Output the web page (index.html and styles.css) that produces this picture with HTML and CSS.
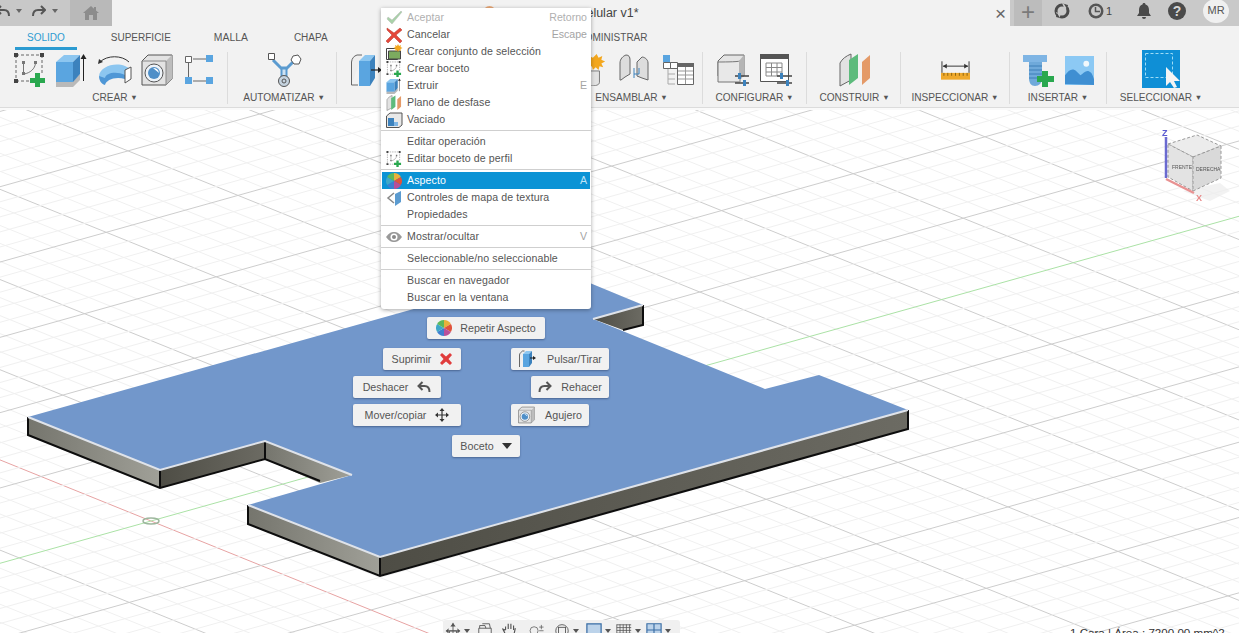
FILE: index.html
```html
<!DOCTYPE html>
<html lang="es">
<head>
<meta charset="utf-8">
<title>Fusion</title>
<link rel="stylesheet" href="styles.css">
</head>
<body>
<svg class="defs" aria-hidden="true">
  <symbol id="s-sketch" viewBox="0 0 32 34">
    <path d="M2 2H28M2 2V28M2 28H22M28 2V20" fill="none" stroke="#666" stroke-width="1" stroke-dasharray="3 2"/>
    <path d="M0 0h4v4H0zM26 0h4v4h-4zM0 26h4v4H0z" fill="#444"/>
    <path d="M8 8h3v3H8zM20 8h3v3h-3zM8 19h3v3H8z" fill="#777"/>
    <path d="M9.500 10V20M21.500 10C21 16 16 20 10 21" fill="none" stroke="#777"/>
    <path d="M21 20h5v5h5v5h-5v4h-5v-4h-5v-5h5z" fill="#2aa84f"/>
  </symbol>
  <symbol id="s-extrude" viewBox="0 0 34 34">
    <path d="M1 28h17l7-7v6l-7 7H1z" fill="#b9b9b9"/>
    <path d="M1 9h17v20H1z" fill="#5aa5e0"/>
    <path d="M1 9l8-7h16l-7 7z" fill="#8cc6f0"/>
    <path d="M18 9l7-7v19l-7 8z" fill="#3c82bd"/>
    <path d="M28.500 28V4" stroke="#222" fill="none"/>
    <path d="M28.500 1l-3 5h6z" fill="#222"/>
  </symbol>
  <symbol id="s-plane" viewBox="0 0 32 34">
    <path d="M1 10C3 6 7 3 12 1V27L1 33z" fill="#e2e2e2" stroke="#666"/>
    <path d="M10 7L19 1V25L10 32z" fill="#5dbb7c"/>
    <path d="M23 9L31 2V25L23 32z" fill="#e49a68"/>
  </symbol>
  <symbol id="s-hole" viewBox="0 0 34 34">
    <path d="M1 8L7 2H31V26L25 32H1z" fill="#e3e3e3" stroke="#555"/>
    <path d="M25 8L31 2V26L25 32z" fill="#bdbdbd"/>
    <path d="M1 8H25V32" fill="none" stroke="#888"/>
    <circle cx="13" cy="20" r="9" fill="#eef3f8" stroke="#555"/>
    <circle cx="13" cy="20" r="6" fill="#4f8fc8"/>
    <path d="M12 15a6 6 0 0 1 6 5z" fill="#fff"/>
  </symbol>
  <symbol id="s-select" viewBox="0 0 38 38">
    <path d="M0 0h38v38H0z" fill="#0f8fd6"/>
    <path d="M3.500 3.500h27v24h-27z" fill="none" stroke="#9fdcf6" stroke-dasharray="3 2"/>
    <path d="M24 17l14 14h-6l3 6-3 1-4-6-4 4z" fill="#f4f4f4"/>
  </symbol>
  <symbol id="s-palette" viewBox="0 0 16 16">
    <path d="M8 8V0a8 8 0 0 1 6.900 4z" fill="#e8b13c"/>
    <path d="M8 8l6.900-4a8 8 0 0 1 0 8z" fill="#e0533c"/>
    <path d="M8 8l6.900 4A8 8 0 0 1 8 16z" fill="#b94f9a"/>
    <path d="M8 8v8a8 8 0 0 1-6.900-4z" fill="#3f7fd0"/>
    <path d="M8 8L1.100 12a8 8 0 0 1 0-8z" fill="#3fa8c8"/>
    <path d="M8 8L1.100 4A8 8 0 0 1 8 0z" fill="#5cb85c"/>
  </symbol>
</svg>

<div class="app">
  <header class="topbar">
    <div class="quick">
      <svg class="qicon undo" viewBox="0 0 14 12"><path d="M5 1L1 5l4 4M1 5h7c3 0 5 2 5 6" fill="none" stroke="#555" stroke-width="2"/></svg>
      <i class="tri-caret"></i>
      <svg class="qicon redo" viewBox="0 0 14 12"><path d="M9 1l4 4-4 4M13 5H6c-3 0-5 2-5 6" fill="none" stroke="#555" stroke-width="2"/></svg>
      <i class="tri-caret"></i>
      <div class="home">
        <svg class="home-ic" viewBox="0 0 16 14"><path d="M8 0L0 7h2v7h4V9h4v5h4V7h2l-3-2.600V1h-2v1.700z" fill="#8c8c8c"/></svg>
      </div>
    </div>
    <div class="doctab">
      <span></span>
      <div class="doctitle">
        <span class="docdot"></span>
        <span>Soporte para celular v1*</span>
      </div>
      <span class="close">×</span>
    </div>
    <div class="topright">
      <div class="plus">+</div>
      <svg class="tri tri-sync" viewBox="0 0 16 16"><circle cx="8" cy="8" r="6" fill="none" stroke="#4a4a4a" stroke-width="3"/><path d="M8 0l6 3-3 4zM5 16L2 9l5 2z" fill="#c9c9c9"/><path d="M10 1l4 1-1 4zM6 15l-4-1 1-4z" fill="#4a4a4a"/></svg>
      <div class="jobs">
        <svg class="tri" viewBox="0 0 16 16"><circle cx="8" cy="8" r="7.500" fill="#555"/><circle cx="8" cy="8" r="5" fill="#c9c9c9"/><path d="M7.500 4v4.500H12" fill="none" stroke="#555" stroke-width="1.500"/></svg>
        <span>1</span>
      </div>
      <svg class="tri tri-bell" viewBox="0 0 14 16"><path d="M7 0c1 0 1.500.7 1.500 1.500C11 2.300 12 4.500 12 7v3l2 3H0l2-3V7c0-2.500 1-4.700 3.500-5.500C5.500.7 6 0 7 0z" fill="#4a4a4a"/><path d="M5 14h4a2 2 0 0 1-4 0z" fill="#4a4a4a"/></svg>
      <div class="help">?</div>
      <div class="avatar">MR</div>
    </div>
  </header>

  <section class="ribbon">
    <nav class="tabs">
      <span class="tab active">SOLIDO</span>
      <span class="tab">SUPERFICIE</span>
      <span class="tab tab-malla">MALLA</span>
      <span class="tab">CHAPA</span>
      <span class="tab tab-admin">ADMINISTRAR</span>
    </nav>
    <div class="groups">
      <div class="group g-create">
        <div class="tools">
          <svg class="t32"><use href="#s-sketch"/></svg>
          <svg class="t34"><use href="#s-extrude"/></svg>
          <svg class="t34" viewBox="0 0 34 34">
            <path d="M2 9C9 2 24 2 31 9" fill="none" stroke="#333"/><path d="M0 11l1-5 4 3z" fill="#333"/>
            <path d="M1 23C2 14 16 9 27 13l6 3-6 8C20 20 9 23 7 30z" fill="#8cc6f0"/>
            <path d="M1 23C1 27 3 31 7 32c1-5 10-9 20-6v-4C18 18 8 20 7 25z" fill="#4f97d6"/>
            <path d="M27 17l6-3v12l-6 4z" fill="#fff" stroke="#555"/>
          </svg>
          <svg class="t34"><use href="#s-hole"/></svg>
          <svg class="t32" viewBox="0 0 32 32">
            <path d="M9 5h13M4.500 9v14M9 27h13" stroke="#666" fill="none"/>
            <path d="M1.500 2.500h6v6h-6z" fill="#fff" stroke="#666"/>
            <path d="M22 1h7v7h-7zM1 23h7v7H1zM22 23h7v7h-7z" fill="#5aa5e0"/>
          </svg>
        </div>
        <div class="glabel">CREAR <i>▼</i></div>
      </div>
      <div class="group g-auto">
        <div class="tools">
          <svg class="t36" viewBox="0 0 36 36">
            <path d="M7 8L16 17V26M29 8L20 17V26M14 16H22" fill="none" stroke="#5b9bd0" stroke-width="3"/>
            <path d="M16 17h4v9h-4z" fill="#cfe2f2" stroke="#5b9bd0"/>
            <path d="M2.500 1.500h6v6h-6z" fill="#fff" stroke="#555"/>
            <path d="M27 4l5-1 3 4-2 5-5 0-3-4z" fill="#fff" stroke="#555"/>
            <circle cx="18" cy="29" r="5.500" fill="#c5d3df" stroke="#555"/><circle cx="18" cy="29" r="2" fill="none" stroke="#555"/>
          </svg>
        </div>
        <div class="glabel">AUTOMATIZAR <i>▼</i></div>
      </div>
      <div class="group g-mod">
        <div class="tools tools-mod">
          <svg class="t32" viewBox="0 0 32 34">
            <path d="M1.500 32V9C2 5 4 3 7 2h5" fill="#eee" stroke="#666"/><path d="M1.500 32H8" stroke="#666"/>
            <path d="M9 8h11v25H9z" fill="#5aa5e0"/><path d="M9 8l6-6h10l-5 6z" fill="#8cc6f0"/><path d="M20 8l5-6v23l-5 8z" fill="#3c82bd"/>
            <path d="M21 17h8" stroke="#222" stroke-width="1.200"/><path d="M32 17l-4-3v6z" fill="#222"/>
          </svg>
        </div>
      </div>
      <div class="group g-asm">
        <div class="tools tools-asm">
          <svg class="t30" viewBox="0 0 30 34">
            <path d="M4 18h20v12c0 3-4 4-10 4S4 33 4 30z" fill="#e2e2e2" stroke="#777"/>
            <path d="M21 0l2 4 4-2-1 4 4 2-4 2 2 4-4-1-1 4-3-3-3 3-1-4-4 1 2-4-4-2 4-2-1-4 4 2z" fill="#f3a71e"/>
          </svg>
          <svg class="t32" viewBox="0 0 32 32">
            <path d="M2 26V9c0-4 3-7 6-8 3 0 4 2 4 5v14l-5 3-4 3z" fill="#ddd" stroke="#666"/>
            <path d="M30 26V9c0-4-4-6-6-6l-5 5v14l5 2z" fill="#ddd" stroke="#666"/>
            <path d="M16 14v10M21 14v6h-5" fill="none" stroke="#3c82bd"/>
          </svg>
          <svg class="t32" viewBox="0 0 32 32">
            <path d="M1 1h7v7H1z" fill="#5aa5e0"/><path d="M8.500 8.500h7v6h-7zM1.500 8.500h7v6h-7z" fill="#fff" stroke="#666"/>
            <path d="M6 15v15h7M6 20h7M6 25h7" stroke="#aaa" fill="none"/>
            <path d="M15.500 9.500h16v21h-16z" fill="#fff" stroke="#666"/><path d="M15 9h17v4H15z" fill="#666"/>
            <path d="M16 17h15M16 21h15M16 25h15M23.500 13v17" stroke="#999"/>
          </svg>
        </div>
        <div class="glabel">ENSAMBLAR <i>▼</i></div>
      </div>
      <div class="group g-conf">
        <div class="tools">
          <svg class="t32" viewBox="0 0 32 32">
            <path d="M1 7L7 1H27V22H1z" fill="#e4e4e4" stroke="#666"/>
            <path d="M1 8C3 8 21 8 23 7V28H1z" fill="#e8e8e8" stroke="#777"/><path d="M22 7l5-6v20l-5 7z" fill="#b5b5b5"/>
            <path d="M18 22h14M18 29h14" stroke="#444" stroke-width="1.400"/><path d="M21 19h3v6h-3zM26 26h3v6h-3z" fill="#3c82bd"/>
          </svg>
          <svg class="t32" viewBox="0 0 32 32">
            <path d="M.500.500h28v27H.500z" fill="#fff" stroke="#555"/><path d="M0 0h29v5H0z" fill="#555"/>
            <path d="M6 9h16v13H6zM6 13.500h16M6 18h16M11.500 9v13M17 9v13" fill="none" stroke="#888"/>
            <path d="M17 22h15M17 29h15" stroke="#444" stroke-width="1.400"/><path d="M20 19h3v6h-3zM26 26h3v6h-3z" fill="#3c82bd"/>
          </svg>
        </div>
        <div class="glabel">CONFIGURAR <i>▼</i></div>
      </div>
      <div class="group g-build">
        <div class="tools"><svg class="t32"><use href="#s-plane"/></svg></div>
        <div class="glabel">CONSTRUIR <i>▼</i></div>
      </div>
      <div class="group g-insp">
        <div class="tools">
          <svg class="t30" viewBox="0 0 30 20">
            <path d="M1 1v12M29 1v12" stroke="#333"/><path d="M2 6h26" stroke="#333"/><path d="M2 6l4-2.500v5zM28 6l-4-2.500v5z" fill="#333"/>
            <path d="M0 13h30v7H0z" fill="#efa92c"/>
            <path d="M3 13v3M7 13v3M11 13v3M15 13v3M19 13v3M23 13v3M27 13v3" stroke="#8a6312"/>
          </svg>
        </div>
        <div class="glabel">INSPECCIONAR <i>▼</i></div>
      </div>
      <div class="group g-ins">
        <div class="tools">
          <svg class="t32" viewBox="0 0 32 34">
            <path d="M0 2h24v7H0z" fill="#7fb5e4"/><path d="M6 9h13v16c0 5-3 8-7 8s-6-3-6-8z" fill="#6fa9da"/>
            <path d="M6 13h13M6 17h13M6 21h13M6 25h13" stroke="#3f7fb8"/>
            <path d="M19 18h6v5h6v6h-6v5h-6v-5h-5v-6h5z" fill="#2aa84f"/>
          </svg>
          <svg class="t30" viewBox="0 0 30 30">
            <path d="M0 0h30v30H0z" fill="#8cc9f4"/>
            <path d="M0 29V20c4-6 8-8 12-4l4 4c3-2 6-6 9-4 3 1 4 5 5 8v6z" fill="#3f8fd2"/>
            <circle cx="22" cy="8" r="3" fill="#f2f8fc"/>
          </svg>
        </div>
        <div class="glabel">INSERTAR <i>▼</i></div>
      </div>
      <div class="group g-sel">
        <div class="tools"><svg class="t38"><use href="#s-select"/></svg></div>
        <div class="glabel">SELECCIONAR <i>▼</i></div>
      </div>
    </div>
  </section>

  <main class="viewport">
    <svg class="scene" viewBox="0 110 1239 523" preserveAspectRatio="none">
      <g id="grid"></g>
      <ellipse cx="151" cy="521" rx="8" ry="3" fill="none" stroke="#9fb79f" stroke-width="1.500"/>
      <defs>
        <linearGradient id="wl" x1="0" y1="0" x2="1" y2="0"><stop offset="0" stop-color="#75756d"/><stop offset="1" stop-color="#a0a098"/></linearGradient>
        <linearGradient id="wd" x1="0" y1="0" x2="1" y2="0"><stop offset="0" stop-color="#4e4d45"/><stop offset="1" stop-color="#6c6b63"/></linearGradient>
      </defs>
      <path d="M265 441L352 475L320 483L265 459Z" fill="url(#wl)"/>
      <path d="M593 319L643 305V325L623 330Z" fill="url(#wd)"/>
      <path d="M28 417L160 470V488L28 435Z" fill="url(#wl)"/>
      <path d="M160 470L265 441V459L160 488Z" fill="url(#wd)"/>
      <path d="M248 505L380 557V576L248 524Z" fill="url(#wl)"/>
      <path d="M380 557L908 410V429L380 576Z" fill="url(#wd)"/>
      <path class="edge-dark" d="M28 417V435L160 488L265 459L320 481M160 470V488M248 505V524L380 576L908 429V410M380 557V576M643 305V325L623 330M265 441V459"/>
      <path class="face" d="M28 417L556 269L643 305L593 319L765 389L819 375L908 410L380 557L248 505L352 475L265 441L160 470Z"/>
      <path class="edge-light" d="M28 417L160 470L265 441L352 475M248 505L380 557L908 410M593 319L643 305"/>
    </svg>
    <div class="cube">
      <svg viewBox="0 0 80 75">
        <path d="M28 62l27 10 20-10-10-8z" fill="#ececec" opacity=".7"/>
        <path d="M13 15L42 6 66 17 38 28z" fill="#ececec" stroke="#999" stroke-dasharray="3 2"/>
        <path d="M13 15L38 28V62L13 48z" fill="#e3e3e3" stroke="#999" stroke-dasharray="3 2"/>
        <path d="M38 28L66 17V49L38 62z" fill="#d9d9d9" stroke="#999" stroke-dasharray="3 2"/>
        <path d="M11 8V49" stroke="#6a6ad0" stroke-width="2.500"/>
        <path d="M11 50L39 64" stroke="#e89292" stroke-width="2.500"/>
        <text x="7" y="7" class="axis-z">Z</text>
        <text x="41" y="72" class="axis-x">X</text>
        <text x="17" y="40" class="cube-t">FRENTE</text>
        <text x="41" y="42" class="cube-t">DERECHA</text>
      </svg>
    </div>
  </main>
</div>

<div class="ctx">
  <div class="row off"><svg class="mi" viewBox="0 0 18 16"><path d="M2 9l5 5L17 2l-1-1L7 10 3 7z" fill="#a8d2a8" stroke="#b8b8b8" stroke-width=".5"/></svg><span class="rt">Aceptar</span><kbd>Retorno</kbd></div>
  <div class="row"><svg class="mi" viewBox="0 0 18 16"><path d="M2 1L9 6l6-5 2 2-6 5 6 6-2 2-6-6-6 6-2-2 6-6-5-5z" fill="#e5473a" stroke="#b0352b" stroke-width=".5"/></svg><span class="rt">Cancelar</span><kbd>Escape</kbd></div>
  <div class="row"><svg class="mi" viewBox="0 0 18 16"><path d="M1.500 4.500h11v11h-11z" fill="#fff" stroke="#444"/><path d="M3.500 7h12v8h-12z" fill="#7cab5f" stroke="#444"/><path d="M13 0l1 2 2-1-.5 2 2 1-2 1 .5 2-2-1-1 2-1-2-2 1 .5-2-2-1 2-1-.5-2 2 1z" fill="#f3a71e"/></svg><span class="rt">Crear conjunto de selección</span></div>
  <div class="row"><svg class="mi"><use href="#s-sketch"/></svg><span class="rt">Crear boceto</span></div>
  <div class="row"><svg class="mi"><use href="#s-extrude"/></svg><span class="rt">Extruir</span><kbd>E</kbd></div>
  <div class="row"><svg class="mi"><use href="#s-plane"/></svg><span class="rt">Plano de desfase</span></div>
  <div class="row"><svg class="mi" viewBox="0 0 18 16"><path d="M1.500 4L5 1h12v12l-3 2.500H1.500z" fill="#e8e8e8" stroke="#555"/><path d="M3 6h6v8H3z" fill="#3c82bd"/><path d="M9 10h4v4H9z" fill="#7fb5e4"/></svg><span class="rt">Vaciado</span></div>
  <div class="sep"></div>
  <div class="row"><span class="mi"></span><span class="rt">Editar operación</span></div>
  <div class="row"><svg class="mi"><use href="#s-sketch"/></svg><span class="rt">Editar boceto de perfil</span></div>
  <div class="sep"></div>
  <div class="row hot"><svg class="mi"><use href="#s-palette"/></svg><span class="rt">Aspecto</span><kbd>A</kbd></div>
  <div class="row"><svg class="mi" viewBox="0 0 18 16"><path d="M9 3L3 8l6 5" fill="none" stroke="#888" stroke-width="1.500"/><path d="M10 4l6-3v11l-6 4z" fill="#5b9bd0"/></svg><span class="rt">Controles de mapa de textura</span></div>
  <div class="row"><span class="mi"></span><span class="rt">Propiedades</span></div>
  <div class="sep"></div>
  <div class="row"><svg class="mi" viewBox="0 0 18 16"><path d="M1 8c3-4 5-5 8-5s5 1 8 5c-3 4-5 5-8 5s-5-1-8-5z" fill="#999"/><circle cx="9" cy="8" r="3.500" fill="#fff"/><circle cx="9" cy="8" r="2" fill="#888"/></svg><span class="rt">Mostrar/ocultar</span><kbd>V</kbd></div>
  <div class="sep"></div>
  <div class="row"><span class="mi"></span><span class="rt">Seleccionable/no seleccionable</span></div>
  <div class="sep"></div>
  <div class="row"><span class="mi"></span><span class="rt">Buscar en navegador</span></div>
  <div class="row"><span class="mi"></span><span class="rt">Buscar en la ventana</span></div>
</div>

<div class="mk mk-repeat"><svg class="mk-ic16"><use href="#s-palette"/></svg><span>Repetir Aspecto</span></div>
<div class="mk mk-del"><span>Suprimir</span><svg class="mk-ic12" viewBox="0 0 12 12"><path d="M2 0l4 3.500L10 0l2 2-3.500 4L12 10l-2 2-4-3.500L2 12l-2-2 3.500-4L0 2z" fill="#e03c3c"/></svg></div>
<div class="mk mk-pull"><svg class="mk-ic18" viewBox="0 0 18 18"><path d="M1.500 17V5c0-2 2-3 3-4h2" fill="#eee" stroke="#666"/><path d="M5 4h6v13H5z" fill="#5aa5e0"/><path d="M5 4l3-3h6l-3 3z" fill="#8cc6f0"/><path d="M11 4l3-3v12l-3 4z" fill="#3c82bd"/><path d="M12 8h4" stroke="#222"/><path d="M18 8l-3-2v4z" fill="#222"/></svg><span>Pulsar/Tirar</span></div>
<div class="mk mk-undo"><span>Deshacer</span><svg class="mk-ic14" viewBox="0 0 14 12"><path d="M5.500 1L1.500 5l4 4M1.500 5h6c3 0 5 2 5 6" fill="none" stroke="#555" stroke-width="2"/></svg></div>
<div class="mk mk-redo"><svg class="mk-ic14" viewBox="0 0 14 12"><path d="M8.500 1l4 4-4 4M12.500 5h-6c-3 0-5 2-5 6" fill="none" stroke="#555" stroke-width="2"/></svg><span>Rehacer</span></div>
<div class="mk mk-move"><span>Mover/copiar</span><svg class="mk-ic14" viewBox="0 0 14 14"><path d="M7 1v12M1 7h12" stroke="#333" stroke-width="1.200"/><path d="M7 0l2.500 3h-5zM7 14l2.500-3h-5zM0 7l3-2.500v5zM14 7l-3-2.500v5z" fill="#333"/></svg></div>
<div class="mk mk-hole"><svg class="mk-ic18"><use href="#s-hole"/></svg><span>Agujero</span></div>
<div class="mk mk-sketch"><span>Boceto</span><i class="mk-caret"></i></div>

<div class="navbar">
  <svg class="nv" viewBox="0 0 18 16"><path d="M9 0v16M1 9h16" stroke="#555"/><path d="M9 0l3 4H6zM1 9l3-3v6zM17 9l-3-3v6z" fill="#555"/><path d="M5 9h8v7H5z" fill="none" stroke="#555"/></svg><i class="nv-caret"></i>
  <svg class="nv gap7" viewBox="0 0 18 16"><path d="M2 6h14v10H2zM3 6V3h6l1 3M6 1h8l1 5" fill="none" stroke="#555"/></svg>
  <svg class="nv gap9" viewBox="0 0 18 16"><path d="M4 8V4M7 7V1M10 7V1M13 8V3M4 8l-3-1 4 8h8l2-9" fill="none" stroke="#555" stroke-width="1.300"/></svg>
  <svg class="nv gap11" viewBox="0 0 22 16"><circle cx="7" cy="9" r="5.500" fill="none" stroke="#555"/><path d="M14 4h6M17 1v6M14 9h6" stroke="#555"/></svg>
  <svg class="nv gap9" viewBox="0 0 18 16"><circle cx="9" cy="9" r="7" fill="none" stroke="#555"/><rect x="5" y="5" width="8" height="8" fill="none" stroke="#555"/></svg><i class="nv-caret"></i>
  <svg class="nv gap7" viewBox="0 0 18 16"><path d="M1 1h16v15H1z" fill="#bcd3ea" stroke="#3a6ea5" stroke-width="1.400"/></svg><i class="nv-caret"></i>
  <svg class="nv gap5" viewBox="0 0 20 16"><path d="M1 1.500h18M1 5h18M1 8.500h18M1 12h18M1 1v13M5 1v13M9 1v13M13 1v13M17 1v13" stroke="#555" fill="none"/></svg><i class="nv-caret"></i>
  <svg class="nv gap5" viewBox="0 0 18 16"><path d="M1 1h16v15H1zM9 1v15M1 8h16" fill="#bcd3ea" stroke="#3a6ea5" stroke-width="1.300"/></svg><i class="nv-caret"></i>
</div>
<div class="status">1 Cara | Área : 7200,00 mm^2</div>
<script src="grid.js"></script>
</body>
</html>
```
FILE: styles.css
```css
* { box-sizing: border-box; }
html, body { margin: 0; padding: 0; }
body {
  position: relative;
  width: 1239px;
  height: 633px;
  overflow: hidden;
  background: #fff;
  font-family: "Liberation Sans", Arial, sans-serif;
  color: #555;
}
.defs { position: absolute; width: 0; height: 0; }
.app { display: flex; flex-direction: column; height: 633px; }

/* top bar */
.topbar { display: flex; height: 26px; flex: none; }
.quick { width: 112px; padding-bottom: 5px; background: #c8c8c8; display: flex; align-items: center; overflow: hidden; }
.qicon { width: 14px; height: 12px; flex: none; }
.undo { margin-left: -4px; }
.redo { margin-left: 10px; }
.tri-caret { width: 0; height: 0; margin-left: 6px; border-left: 3px solid transparent; border-right: 3px solid transparent; border-top: 4px solid #666; }
.home { width: 42px; height: 26px; margin: 0 0 -5px auto; align-self: flex-start; background: #b9b9b9; display: flex; align-items: center; justify-content: center; }
.home-ic { width: 16px; height: 14px; }
.doctab { flex: 1; background: #f2f2f2; display: grid; grid-template-columns: 1fr auto 1fr; align-items: center; }
.doctitle { display: flex; align-items: center; gap: 8px; font-size: 12.5px; color: #444; }
.docdot { width: 13px; height: 14px; border-radius: 50%; background: #e8a878; }
.close { justify-self: end; margin-right: 4px; font-size: 19px; line-height: 1; color: #666; }
.topright { width: 229px; padding-bottom: 5px; background: #c9c9c9; display: flex; align-items: center; }
.plus { width: 28px; height: 26px; margin: 0 0 -5px 4px; align-self: flex-start; background: #bcbcbc; color: #7a7a7a; font-size: 24px; line-height: 24px; text-align: center; }
.tri { width: 16px; height: 16px; flex: none; }
.tri-sync { margin-left: 12px; }
.jobs { display: flex; align-items: center; gap: 2px; margin-left: 18px; font-size: 11px; color: #444; }
.tri-bell { width: 14px; margin-left: 25px; }
.help { width: 18px; height: 18px; margin-left: 17px; border-radius: 50%; background: #4a4a4a; color: #d5d5d5; font-size: 14px; font-weight: 700; line-height: 18px; text-align: center; }
.avatar { width: 26px; height: 24px; margin-left: 17px; border-radius: 50%; background: #f0f0f0; color: #555; font-size: 11px; line-height: 22px; text-align: center; }

/* ribbon */
.ribbon { height: 82px; flex: none; background: #f2f2f2; border-bottom: 1px solid #dcdcdc; display: flex; flex-direction: column; }
.tabs { display: flex; gap: 22px; height: 24px; padding: 4px 0 0 15px; flex: none; }
.tab { height: 20px; padding: 0 12px; font-size: 10px; line-height: 16px; color: #555; }
.tab.active { color: #2c9bd1; border-bottom: 3px solid #2c9bd1; }
.tab-malla { margin-left: -3px; font-size: 10.4px; }
.tab-admin { margin-left: 205px; }
.groups { display: flex; padding-top: 2px; }
.group { height: 52px; flex: none; display: flex; flex-direction: column; border-right: 1px solid #dcdcdc; }
.g-create { width: 228px; padding-left: 3px; }
.g-auto { width: 109px; padding-left: 4px; }
.g-mod { width: 224px; }
.g-asm { width: 142px; }
.g-conf { width: 104px; }
.g-build { width: 94px; padding-left: 2px; }
.g-insp { width: 109px; }
.g-ins { width: 97px; }
.g-sel { width: 108px; border-right: 0; }
.tools { height: 36px; display: flex; align-items: center; justify-content: center; gap: 9px; }
.tools-mod { justify-content: flex-start; padding-left: 13px; }
.tools-asm { padding-left: 7px; gap: 12px; }
.g-conf .tools { gap: 11px; }
.g-ins .tools { gap: 10px; }
.g-sel .tools { margin-top: -2px; height: 38px; }
.t30 { width: 30px; height: 32px; }
.t32 { width: 32px; height: 34px; }
.t34 { width: 34px; height: 34px; }
.t36 { width: 36px; height: 36px; }
.t38 { width: 38px; height: 38px; flex: none; }
.g-insp .t30 { width: 29px; height: 20px; }
.g-ins .t30 { width: 29px; height: 29px; }
.glabel { height: 16px; font-size: 10.1px; line-height: 19px; text-align: center; white-space: nowrap; color: #555; }
.glabel i { font-style: normal; font-size: 7.5px; vertical-align: 1px; }

/* 3D viewport */
.viewport { flex: 1; position: relative; border-top: 2px solid #fafafa; overflow: hidden; }
.scene { position: absolute; left: 0; top: 0; width: 1239px; height: 523px; }
.face { fill: #7297cb; }
.edge-dark { fill: none; stroke: #0d0d0d; stroke-width: 2; }
.edge-light { fill: none; stroke: #dfe3ea; stroke-width: 2; }
.cube { position: absolute; left: 1155px; top: 19px; width: 80px; height: 75px; filter: blur(.6px); }
.cube svg { width: 80px; height: 75px; display: block; }
.axis-z { fill: #5a5ad0; font-size: 9px; font-weight: 700; }
.axis-x { fill: #e88888; font-size: 9px; font-weight: 700; }
.cube-t { fill: #555; font-size: 5px; }

/* context menu */
.ctx {
  position: absolute; left: 381px; top: 8px; width: 210px; height: 301px;
  padding-top: 1px;
  background: #fff;
  box-shadow: 0 1px 4px rgba(0,0,0,.35);
  border-radius: 0 0 3px 3px;
  font-size: 10.6px;
  color: #555;
}
.row { height: 17px; display: flex; align-items: center; padding: 0 3px 2px; margin: 0 1px; }
.mi { width: 18px; height: 16px; flex: none; margin: 1px 4px -1px 0; display: block; }
.rt { flex: 1; white-space: nowrap; letter-spacing: .1px; }
kbd { font: inherit; color: #a4a4a4; }
.off .rt, .off kbd { color: #b0b0b0; }
.hot { background: #0b93d5; color: #fff; }
.hot kbd { color: #bfe3f5; }
.sep { height: 1px; margin: 2px 0; background: #cfcfcf; }

/* marking menu */
.mk {
  position: absolute; height: 22px; display: flex; align-items: center; justify-content: center; gap: 9px;
  background: #f1f1f1; border-radius: 2px;
  box-shadow: 0 1px 2px rgba(40,60,100,.55);
  font-size: 10.7px; color: #555; white-space: nowrap;
}
.mk-repeat { left: 427px; top: 317px; width: 118px; gap: 8px; }
.mk-del { left: 383px; top: 348px; width: 78px; }
.mk-pull { left: 511px; top: 348px; width: 98px; gap: 11px; }
.mk-undo { left: 353px; top: 376px; width: 88px; }
.mk-redo { left: 531px; top: 376px; width: 78px; }
.mk-move { left: 353px; top: 404px; width: 108px; }
.mk-hole { left: 511px; top: 404px; width: 78px; }
.mk-sketch { left: 452px; top: 435px; width: 68px; gap: 8px; }
.mk-ic16 { width: 16px; height: 16px; }
.mk-ic12 { width: 12px; height: 12px; }
.mk-ic14 { width: 14px; height: 14px; }
.mk-ic18 { width: 18px; height: 18px; }
.mk-caret { width: 0; height: 0; border-left: 5px solid transparent; border-right: 5px solid transparent; border-top: 6px solid #333; }

/* bottom navigation + status */
.navbar {
  position: absolute; left: 443px; bottom: 0; width: 237px; height: 13px; padding: 2px 0 0 2px;
  display: flex; align-items: flex-start; overflow: hidden;
  background: #f0f0f0; border-radius: 3px 3px 0 0;
}
.nv { width: 16px; height: 16px; flex: none; }
.nv-caret { flex: none; width: 0; height: 0; margin: 7px 0 0 3px; border-left: 3px solid transparent; border-right: 3px solid transparent; border-top: 4px solid #555; }
.gap5 { margin-left: 5px; }
.gap7 { margin-left: 7px; }
.gap9 { margin-left: 9px; }
.gap11 { margin-left: 11px; }
.status { position: absolute; left: 1070px; top: 626px; font-size: 11.6px; line-height: 14px; color: #333; white-space: nowrap; }
```
FILE: grid.js
```js
// Ground-plane grid of the 3D viewport: affine lattice through the world origin.
(function () {
  var NS = "http://www.w3.org/2000/svg";
  var host = document.getElementById("grid");
  var O = [151, 521];
  var U = [22, 8.9];      // one minor cell along the red axis
  var V = [26.35, -7.38]; // one minor cell along the green axis
  var L = 80;

  function add(x1, y1, x2, y2, stroke) {
    var el = document.createElementNS(NS, "line");
    el.setAttribute("x1", x1.toFixed(1));
    el.setAttribute("y1", y1.toFixed(1));
    el.setAttribute("x2", x2.toFixed(1));
    el.setAttribute("y2", y2.toFixed(1));
    el.setAttribute("stroke", stroke);
    host.appendChild(el);
  }

  function family(dir, step, axis) {
    var minor = [], major = [];
    for (var k = -90; k <= 90; k++) {
      if (k === 0) continue;
      (k % 5 === 0 ? major : minor).push(k);
    }
    function draw(k, colour) {
      var cx = O[0] + step[0] * k, cy = O[1] + step[1] * k;
      add(cx - dir[0] * L, cy - dir[1] * L, cx + dir[0] * L, cy + dir[1] * L, colour);
    }
    minor.forEach(function (k) { draw(k, "#f0f0f0"); });
    major.forEach(function (k) { draw(k, "#cdcdcd"); });
    draw(0, axis);
  }

  family(U, V, "#e7a3a3");
  family(V, U, "#abe2a6");
})();
```
